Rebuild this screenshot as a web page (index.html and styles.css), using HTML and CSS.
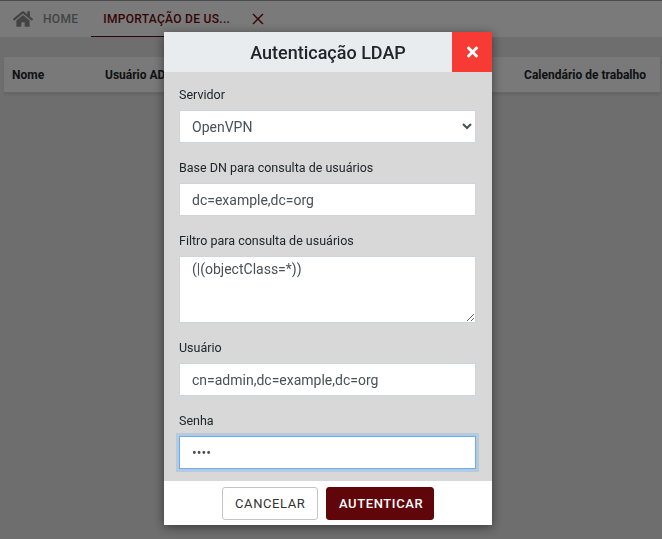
FILE: index.html
```html
<!DOCTYPE html>
<html lang="pt-BR">

<head>
    <meta charset="UTF-8">
    <meta name="viewport" content="width=device-width, initial-scale=1.0">
    <title>Importação de usuários</title>
    <link rel="stylesheet" href="styles.css">
</head>

<body>
    <div class="page">
        <nav class="tabs">
            <a class="tab">
                <svg class="home-icon" viewBox="0 0 576 512" aria-hidden="true">
                    <path d="M280.4 148.3 96 300.1V464a16 16 0 0 0 16 16l112.100-.3a16 16 0 0 0 15.900-16V368a16 16 0 0 1 16-16h64a16 16 0 0 1 16 16v95.600a16 16 0 0 0 16 16.100L464 480a16 16 0 0 0 16-16V300L295.700 148.300a12.200 12.200 0 0 0-15.300 0zM571.600 251.500 488 182.600V44.100a12 12 0 0 0-12-12h-56a12 12 0 0 0-12 12v72.600L318.500 43a48 48 0 0 0-61 0L4.300 251.500a12 12 0 0 0-1.600 16.900l25.500 31A12 12 0 0 0 45.200 301l235.200-193.700a12.200 12.200 0 0 1 15.300 0L530.900 301a12 12 0 0 0 16.900-1.600l25.500-31a12 12 0 0 0-1.700-16.900z"/>
                </svg>
                HOME
            </a>
            <a class="tab tab-active">
                IMPORTAÇÃO DE US...
                <svg class="tab-close" viewBox="0 0 12 12" aria-hidden="true">
                    <path d="M1 1l10 10M11 1L1 11"/>
                </svg>
            </a>
        </nav>
        <div class="table-head">
            <span class="col-name">Nome</span>
            <span class="col-user">Usuário AD</span>
            <span class="col-cal">Calendário de trabalho</span>
        </div>
    </div>

    <div class="overlay">
        <div class="modal">
            <header class="modal-header">
                <h2>Autenticação LDAP</h2>
                <button class="modal-close" aria-label="Fechar">
                    <svg viewBox="0 0 352 512" aria-hidden="true">
                        <path d="M242.700 256l100-100c12.300-12.300 12.300-32.200 0-44.500l-22.200-22.200c-12.300-12.300-32.200-12.300-44.500 0L176 189.300 76 89.300c-12.300-12.300-32.200-12.300-44.500 0L9.300 111.500c-12.300 12.300-12.300 32.200 0 44.500l100 100-100 100c-12.300 12.300-12.300 32.200 0 44.500l22.200 22.200c12.300 12.300 32.200 12.300 44.500 0l100-100 100 100c12.300 12.300 32.200 12.300 44.500 0l22.200-22.200c12.300-12.300 12.300-32.200 0-44.500L242.700 256z"/>
                    </svg>
                </button>
            </header>
            <form class="modal-body">
                <div class="input-field">
                    <label for="server">Servidor</label>
                    <select id="server">
                        <option>OpenVPN</option>
                    </select>
                </div>
                <div class="input-field">
                    <label for="base">Base DN para consulta de usuários</label>
                    <input type="text" id="base" value="dc=example,dc=org">
                </div>
                <div class="input-field">
                    <label for="filter">Filtro para consulta de usuários</label>
                    <textarea id="filter">(|(objectClass=*))</textarea>
                </div>
                <div class="input-field">
                    <label for="user">Usuário</label>
                    <input type="text" id="user" value="cn=admin,dc=example,dc=org">
                </div>
                <div class="input-field">
                    <label for="pass">Senha</label>
                    <input class="focused" type="password" id="pass" value="1234">
                </div>
            </form>
            <footer class="modal-footer">
                <button class="btn btn-light">CANCELAR</button>
                <button class="btn btn-dark">AUTENTICAR</button>
            </footer>
        </div>
    </div>
</body>

</html>
```

FILE: styles.css
```css
* {
    box-sizing: border-box;
}

body {
    margin: 0;
    height: 539px;
    overflow: hidden;
    font-family: Roboto, sans-serif;
    background-color: #fff;
    color: #212529;
}

.page {
    height: 100%;
    background-color: #dcdcdc;
}

.tabs {
    display: flex;
    height: 37px;
    background-color: #f5f5f5;
    border-top: 1px solid #999;
}

.tab {
    display: flex;
    align-items: center;
    padding: 0 13px;
    font-size: 12px;
    font-weight: 500;
    letter-spacing: 0.3px;
    color: #888;
}

.home-icon {
    width: 20px;
    height: 18px;
    margin-right: 10px;
    fill: #888;
}

.tab-active {
    width: 188px;
    padding: 0 12px;
    color: #6b0a0d;
    border-bottom: 1px solid #600608;
    background-color: #f5f5f5;
}

.tab-close {
    width: 12px;
    height: 12px;
    margin-left: 22px;
    fill: none;
    stroke: #6b0a0d;
    stroke-width: 1.4;
}

.table-head {
    position: relative;
    display: flex;
    align-items: center;
    height: 36px;
    margin: 20px 2px 0 4px;
    padding: 0 14px 0 8px;
    font-size: 12px;
    font-weight: 700;
    background-color: #f2f2f2;
    border-bottom: 1px solid #d0d0d0;
    box-shadow: 0 2px 2px rgba(0, 0, 0, 0.08);
}

.col-name {
    width: 93px;
}

.col-cal {
    margin-left: auto;
}

.overlay {
    position: fixed;
    top: 0;
    left: 0;
    width: 100%;
    height: 100%;
    display: flex;
    justify-content: center;
    align-items: flex-start;
    padding-top: 32px;
    background-color: rgba(0, 0, 0, 0.5);
}

.modal {
    width: 328px;
    margin-left: -6px;
    background-color: #d8d8d8;
    box-shadow: 0 2px 10px rgba(0, 0, 0, 0.5);
}

.modal-header {
    display: flex;
    align-items: center;
    height: 40px;
    padding-left: 40px;
    background-color: #e9ecef;
}

.modal-header h2 {
    flex: 1;
    margin: 0;
    font-size: 18px;
    font-weight: 500;
    text-align: center;
}

.modal-close {
    width: 40px;
    height: 40px;
    padding: 0;
    border: none;
    background-color: #f73a33;
}

.modal-close svg {
    display: block;
    width: 11px;
    height: 16px;
    margin: 0 auto;
    fill: #fff;
}

.modal-body {
    height: 409px;
    padding: 14px 15px 0 15px;
}

.input-field {
    display: flex;
    flex-direction: column;
    margin-bottom: 16px;
}

.input-field label {
    margin-bottom: 7px;
    font-size: 12.500px;
    line-height: 17px;
}

.input-field input,
.input-field select,
.input-field textarea {
    width: 297px;
    height: 33px;
    padding: 0 12px;
    font-family: Roboto, sans-serif;
    font-size: 14px;
    color: #495057;
    background-color: #fff;
    border: 1px solid #ced4da;
    border-radius: 0;
    outline: none;
}

.input-field select {
    padding: 0 8px;
}

.input-field textarea {
    height: 67px;
    padding: 4px 12px;
}

.input-field .focused {
    border-color: #64aef2;
    box-shadow: 0 0 0 3px rgba(0, 123, 255, 0.15);
}

.modal-footer {
    display: flex;
    justify-content: center;
    gap: 8px;
    height: 44px;
    padding-top: 6px;
    background-color: #fff;
}

.btn {
    height: 33px;
    padding: 0 12px;
    font-family: Roboto, sans-serif;
    font-size: 13px;
    font-weight: 400;
    letter-spacing: 0.6px;
    border-radius: 3px;
}

.btn-light {
    width: 96px;
    color: #333;
    background-color: #fff;
    border: 1px solid #c4c4c4;
}

.btn-dark {
    width: 108px;
    font-weight: 500;
    color: #fff;
    background-color: #60060a;
    border: 1px solid #60060a;
}
```
